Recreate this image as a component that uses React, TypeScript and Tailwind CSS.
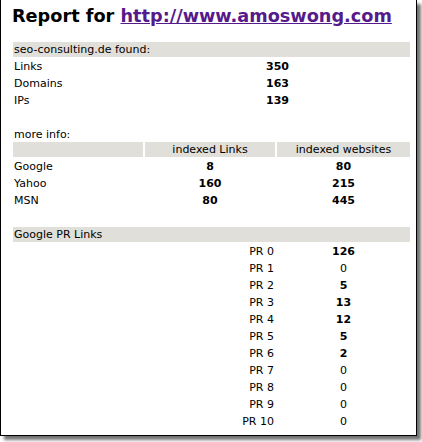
import React from "react";

const font = "font-['DejaVu_Sans',sans-serif]";

const found = [
  ["Links", "350"],
  ["Domains", "163"],
  ["IPs", "139"],
];

const engines = [
  ["Google", "8", "80"],
  ["Yahoo", "160", "215"],
  ["MSN", "80", "445"],
];

const pr: [string, string, boolean][] = [
  ["PR 0", "126", true],
  ["PR 1", "0", false],
  ["PR 2", "5", true],
  ["PR 3", "13", true],
  ["PR 4", "12", true],
  ["PR 5", "5", true],
  ["PR 6", "2", true],
  ["PR 7", "0", false],
  ["PR 8", "0", false],
  ["PR 9", "0", false],
  ["PR 10", "0", false],
];

const grid = "grid grid-cols-[130px_130px_133px] gap-x-[2px] gap-y-[2px] auto-rows-[15px]";

export default function App() {
  return (
    <div className="w-[422px] h-[442px] bg-white">
      <div
        className={`w-[417px] h-[436px] bg-white border-x border-b border-black shadow-[4px_4px_3px_rgba(0,0,0,0.55)] pl-[12px] text-black text-[11px] leading-[15px] ${font}`}
      >
        <div className="h-[42px] pt-[6px] -ml-[1px]">
          <div className="font-['DejaVu_Sans',sans-serif] font-bold text-[17.7px] leading-[20px] whitespace-nowrap">
            Report for{" "}
            <a href="#" className="text-[#551a8b] underline">
              http://www.amoswong.com
            </a>
          </div>
        </div>

        <div className={grid}>
          <div className="col-span-3 bg-[#e1dfd9] pl-[1px]">seo-consulting.de found:</div>
          {found.map(([l, v]) => (
            <React.Fragment key={l}>
              <div className="pl-[1px]">{l}</div>
              <div className="col-span-2 text-center font-bold">{v}</div>
            </React.Fragment>
          ))}
        </div>

        <div className="mt-[19px] h-[15px] pl-[1px]">more info:</div>

        <div className={grid}>
          <div className="bg-[#e1dfd9]"></div>
          <div className="bg-[#e1dfd9] text-center">indexed Links</div>
          <div className="bg-[#e1dfd9] text-center">indexed websites</div>
          {engines.map(([n, a, b]) => (
            <React.Fragment key={n}>
              <div className="pl-[1px]">{n}</div>
              <div className="text-center font-bold">{a}</div>
              <div className="text-center font-bold">{b}</div>
            </React.Fragment>
          ))}
        </div>

        <div className={`${grid} mt-[19px]`}>
          <div className="col-span-3 bg-[#e1dfd9] pl-[1px]">Google PR Links</div>
          {pr.map(([l, v, b]) => (
            <React.Fragment key={l}>
              <div></div>
              <div className="text-right pr-[1px]">{l}</div>
              <div className={`text-center ${b ? "font-bold" : ""}`}>{v}</div>
            </React.Fragment>
          ))}
        </div>
      </div>
    </div>
  );
}
